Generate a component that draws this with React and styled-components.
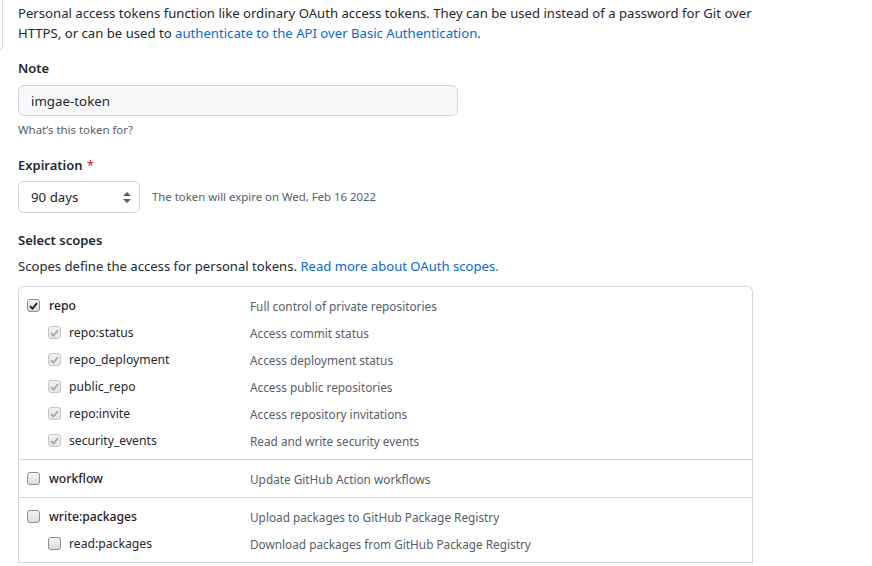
import React from "react";
import styled, { createGlobalStyle } from "styled-components";

const Global = createGlobalStyle`
  html, body { margin: 0; padding: 0; background: #ffffff; }
  body {
    font-family: "Noto Sans", "Open Sans", "Liberation Sans", sans-serif;
    color: #24292f;
    font-size: 13.1px;
  }
  * { box-sizing: border-box; }
`;

const Page = styled.div`
  display: flex;
  align-items: flex-start;
  width: 872px;
  height: 566px;
  overflow: hidden;
`;

const SideEdge = styled.div`
  flex: 0 0 3px;
  height: 50px;
  border-right: 1px solid #d8dee4;
  border-bottom: 1px solid #d8dee4;
  border-bottom-right-radius: 6px;
`;

const Content = styled.div`
  flex: 0 0 735px;
  margin-left: 15px;
  display: flex;
  flex-direction: column;
`;

const Intro = styled.p`
  margin: 3px 0 0;
  font-size: 13.15px;
  line-height: 20px;
  color: #24292f;
`;

const Link = styled.a`
  color: #0969da;
  text-decoration: none;
`;

const Field = styled.div`
  display: flex;
  flex-direction: column;
  margin-top: ${(p) => p.$top}px;
`;

const Label = styled.div`
  font-weight: 600;
  font-size: 13px;
  line-height: 20px;
  color: #24292f;
`;

const Required = styled.span`
  color: #cf222e;
  margin-left: 4px;
  font-weight: 400;
`;

const TextInput = styled.div`
  margin-top: 7px;
  width: 440px;
  height: 31px;
  display: flex;
  align-items: center;
  padding: 0 12px;
  background: #f6f8fa;
  border: 1px solid #d0d7de;
  border-radius: 6px;
  font-size: 13.3px;
  color: #24292f;
`;

const Note = styled.div`
  font-size: 11.4px;
  line-height: 18px;
  color: #57606a;
  margin-top: ${(p) => p.$top || 0}px;
`;

const SelectRow = styled.div`
  margin-top: 6px;
  display: flex;
  align-items: center;
  gap: 12px;
`;

const Select = styled.div`
  width: 122px;
  height: 32px;
  display: flex;
  align-items: center;
  justify-content: space-between;
  padding: 0 8px 0 12px;
  background: #ffffff;
  border: 1px solid #d0d7de;
  border-radius: 6px;
  font-size: 13.3px;
  color: #24292f;
`;

const Desc = styled.div`
  margin-top: 6px;
  font-size: 13.1px;
  line-height: 20px;
  color: #24292f;
`;

const Table = styled.div`
  margin-top: 10px;
  border: 1px solid #d0d7de;
  border-bottom: none;
  border-radius: 6px 6px 0 0;
`;

const Group = styled.div`
  padding: 5px 0 5px;
  border-bottom: 1px solid #d0d7de;
`;

const Row = styled.div`
  display: grid;
  grid-template-columns: 231px 1fr;
  height: 27px;
  align-items: center;
`;

const Name = styled.div`
  display: flex;
  align-items: center;
  gap: ${(p) => (p.$child ? 8 : 9)}px;
  padding-left: ${(p) => (p.$child ? 29 : 8)}px;
  font-size: ${(p) => (p.$child ? 12.2 : 12.2)}px;
  font-weight: ${(p) => (p.$child ? 400 : 500)};
  color: ${(p) => (p.$child ? "#24292f" : "#1f2328")};
`;

const ScopeDesc = styled.div`
  font-size: 11.8px;
  color: #57606a;
`;

const Box = styled.span`
  width: 13px;
  height: 13px;
  flex: 0 0 13px;
  border-radius: 3px;
  border: 1px solid ${(p) => (p.$disabled ? "#c6c6c6" : "#8f8f8f")};
  background: ${(p) =>
    p.$disabled
      ? "linear-gradient(#f0f0f0, #e6e6e6)"
      : "linear-gradient(#f4f4f4, #dcdcdc)"};
  display: inline-flex;
  align-items: center;
  justify-content: center;
`;

function Check({ checked, disabled }) {
  return (
    <Box $disabled={disabled}>
      {checked && (
        <svg width="9" height="8" viewBox="0 0 9 8">
          <path
            d="M1 4.2 L3.4 6.6 L8 1.2"
            fill="none"
            stroke={disabled ? "#a8a8a8" : "#1f1f1f"}
            strokeWidth="1.8"
          />
        </svg>
      )}
    </Box>
  );
}

function Arrows() {
  return (
    <svg width="8" height="11" viewBox="0 0 8 11">
      <path d="M4 0 L8 4 L0 4 Z" fill="#57606a" />
      <path d="M4 11 L8 7 L0 7 Z" fill="#57606a" />
    </svg>
  );
}

const groups = [
  [
    { name: "repo", desc: "Full control of private repositories", checked: true },
    { name: "repo:status", desc: "Access commit status", child: true, checked: true },
    { name: "repo_deployment", desc: "Access deployment status", child: true, checked: true },
    { name: "public_repo", desc: "Access public repositories", child: true, checked: true },
    { name: "repo:invite", desc: "Access repository invitations", child: true, checked: true },
    { name: "security_events", desc: "Read and write security events", child: true, checked: true },
  ],
  [{ name: "workflow", desc: "Update GitHub Action workflows" }],
  [
    { name: "write:packages", desc: "Upload packages to GitHub Package Registry" },
    { name: "read:packages", desc: "Download packages from GitHub Package Registry", child: true },
  ],
];

export default function App() {
  return (
    <>
      <Global />
      <Page>
        <SideEdge />
        <Content>
          <Intro>
            Personal access tokens function like ordinary OAuth access tokens. They can be used instead of a password for Git over
            <br />
            HTTPS, or can be used to <Link href="#">authenticate to the API over Basic Authentication</Link>.
          </Intro>

          <Field $top={15}>
            <Label>Note</Label>
            <TextInput>imgae-token</TextInput>
            <Note $top={5}>What’s this token for?</Note>
          </Field>

          <Field $top={16}>
            <Label>
              Expiration<Required>*</Required>
            </Label>
            <SelectRow>
              <Select>
                <span>90 days</span>
                <Arrows />
              </Select>
              <Note>The token will expire on Wed, Feb 16 2022</Note>
            </SelectRow>
          </Field>

          <Field $top={17}>
            <Label>Select scopes</Label>
            <Desc>
              Scopes define the access for personal tokens.{" "}
              <Link href="#">Read more about OAuth scopes.</Link>
            </Desc>
          </Field>

          <Table>
            {groups.map((g, gi) => (
              <Group key={gi}>
                {g.map((s) => (
                  <Row key={s.name}>
                    <Name $child={s.child}>
                      <Check checked={s.checked} disabled={s.child && s.checked} />
                      {s.name}
                    </Name>
                    <ScopeDesc>{s.desc}</ScopeDesc>
                  </Row>
                ))}
              </Group>
            ))}
          </Table>
        </Content>
      </Page>
    </>
  );
}
